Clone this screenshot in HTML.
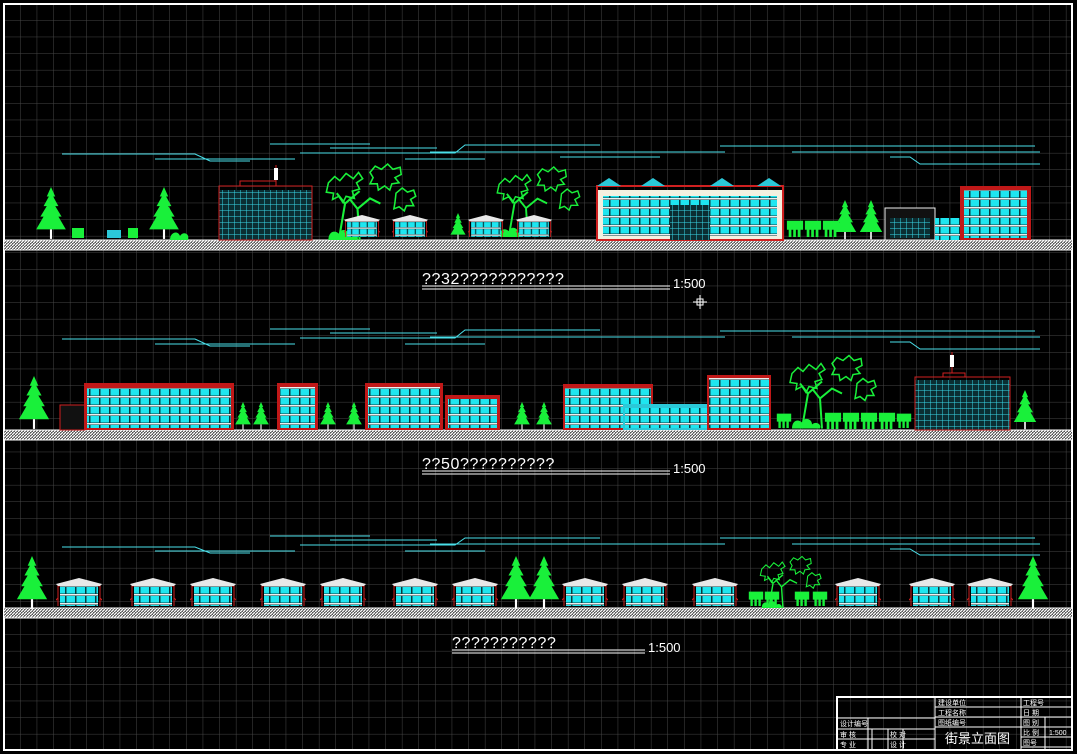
<!DOCTYPE html>
<html><head><meta charset="utf-8"><style>
html,body{margin:0;padding:0;background:#000;width:1077px;height:754px;overflow:hidden}
svg{display:block}
text{font-family:"Liberation Sans","Noto Sans CJK SC",sans-serif}
</style></head><body>
<svg width="1077" height="754" viewBox="0 0 1077 754" xmlns="http://www.w3.org/2000/svg">
<defs>
<pattern id="grid" width="16.6" height="16.6" patternUnits="userSpaceOnUse" x="4" y="4">
<path d="M16.6 0V16.6H0" fill="none" stroke="#474747" stroke-width="1"/></pattern>
<pattern id="hatch" width="3" height="3" patternUnits="userSpaceOnUse">
<rect width="3" height="3" fill="#555"/><path d="M0 3L3 0" stroke="#fff" stroke-width="1.2"/></pattern>
<pattern id="win" width="10" height="9" patternUnits="userSpaceOnUse">
<rect width="10" height="9" fill="#0a3a3e"/><rect x="0.5" y="2" width="8.5" height="6.5" fill="#1ee6f0"/><rect y="0" width="10" height="1.5" fill="#eee"/></pattern>
<pattern id="glass" width="6" height="6" patternUnits="userSpaceOnUse">
<rect width="6" height="6" fill="#0b2e32"/><path d="M0 0H6M0 0V6" stroke="#3ad8e8" stroke-width="1"/></pattern>
<symbol id="pine" viewBox="0 0 28 50">
<polygon points="14,0 18,9 16,9 21,18 18,18 24,28 21,28 28,40 0,40 7,28 4,28 10,18 7,18 12,9 10,9" fill="#19f03a"/>
<rect x="13" y="40" width="2" height="9" fill="#fff"/></symbol>
<symbol id="house" viewBox="0 0 46 32">
<path d="M2 30V10H44V30" fill="none" stroke="#d02020"/>
<polygon points="0,8 23,2 46,8 44,10 2,10" fill="#e8e8e8"/>
<rect x="4" y="10" width="38" height="20" fill="url(#win)"/>
<path d="M-6 30L2 22M44 22L52 30" stroke="#d02020"/></symbol>
<symbol id="tree" viewBox="0 0 120 75">
<path d="M20 20l6-6 5 4 6-7 7 5 5-6 4 6-6 4 3 6-7 2 2 7-8-2-3 6-4-6-6 3 1-6-7-1zM60 10l5-6 6 3 6-5 5 5 7-2 1 7-6 3 4 5-7 1-2 6-5-4-6 4-1-6-7 0 3-6zM85 30l6-5 5 4 6-2 2 6-5 3 3 6-7 0-2 5-5-4-5 2 1-6z" fill="none" stroke="#19f03a" stroke-width="1.5"/>
<path d="M30 75L36 40L28 30M36 40L50 28M50 75L48 45L60 35L70 40M48 45L40 35" fill="none" stroke="#19f03a" stroke-width="2"/>
<path d="M20 75c0-8 6-10 10-6 2-6 10-4 10 2 4-4 10 0 8 4z" fill="#19f03a"/></symbol>
<symbol id="shrub" viewBox="0 0 20 20">
<path d="M1 2h18v10h-3v8h-3v-8h-2v8H8v-8H6v8H3v-8H1z" fill="#19f03a"/></symbol>
</defs>
<rect width="1077" height="754" fill="#000"/>
<rect x="4" y="4" width="1068" height="746" fill="url(#grid)"/>
<rect x="4" y="4" width="1068" height="746" fill="none" stroke="#fff" stroke-width="2"/>

<g stroke="#4ae0ea" stroke-width="1" fill="none">
<path d="M62 154H195L210 161H250M155 159H295M270 144H370M330 148H437M300 153H455L465 145H600M405 159H485M430 152H725M720 146H1035M792 152H1040M890 157H910L920 164H1040M560 157H660"/>
<path d="M62 339H195L210 346H250M155 344H295M270 329H370M330 333H437M300 338H455L465 330H600M405 344H485M430 337H725M720 331H1035M792 337H1040M890 342H910L920 349H1040"/>
<path d="M62 547H195L210 553H250M155 551H295M270 536H370M330 540H437M300 545H455L465 538H600M405 551H485M430 544H725M720 538H1035M792 544H1040M890 549H910L920 555H1040"/>
</g>

<rect x="4" y="240" width="1068" height="10" fill="url(#hatch)"/><path d="M4 240H1072M4 250H1072" stroke="#fff"/>
<rect x="4" y="430" width="1068" height="10" fill="url(#hatch)"/><path d="M4 430H1072M4 440H1072" stroke="#fff"/>
<rect x="4" y="608" width="1068" height="10" fill="url(#hatch)"/><path d="M4 608H1072M4 618H1072" stroke="#fff"/>

<!-- STRIP 1 -->
<use href="#pine" x="36" y="187" width="30" height="53"/>
<use href="#pine" x="149" y="187" width="30" height="53"/>
<use href="#pine" x="450" y="213" width="16" height="27"/>
<use href="#pine" x="832" y="200" width="26" height="40"/>
<use href="#pine" x="858" y="200" width="26" height="40"/>
<rect x="72" y="228" width="12" height="10" fill="#19f03a"/><rect x="128" y="228" width="10" height="10" fill="#19f03a"/>
<rect x="107" y="230" width="14" height="8" fill="#2bc8d8"/>
<path d="M170 240c0-8 8-10 10-4 3-5 10-3 8 4z" fill="#19f03a"/>
<rect x="219" y="190" width="93" height="50" fill="url(#glass)"/>
<rect x="219" y="186" width="93" height="54" fill="none" stroke="#d02020"/>
<path d="M240 186V181H276V186M276 181V165" stroke="#d02020" fill="none"/><rect x="274" y="168" width="4" height="12" fill="#fff"/>
<use href="#tree" x="305" y="162" width="130" height="78"/>
<use href="#tree" x="480" y="162" width="115" height="78"/>
<use href="#house" x="344" y="212" width="36" height="28"/>
<use href="#house" x="392" y="212" width="36" height="28"/>
<use href="#house" x="468" y="212" width="36" height="28"/>
<use href="#house" x="516" y="212" width="36" height="28"/>
<rect x="597" y="190" width="186" height="50" fill="#f4f0e0"/>
<rect x="603" y="196" width="174" height="40" fill="url(#win)"/>
<rect x="597" y="186" width="186" height="54" fill="none" stroke="#d02020" stroke-width="2"/>
<rect x="670" y="205" width="40" height="35" fill="url(#glass)"/>
<g fill="#2bc8d8"><polygon points="597,186 609,178 621,186"/><polygon points="641,186 653,178 665,186"/><polygon points="710,186 722,178 734,186"/><polygon points="757,186 769,178 781,186"/></g>
<g transform="translate(786,218)"><use href="#shrub" width="18" height="20"/><use href="#shrub" x="18" width="18" height="20"/><use href="#shrub" x="36" width="18" height="20"/></g>
<rect x="885" y="208" width="50" height="32" fill="#111" stroke="#eee"/><rect x="890" y="218" width="40" height="20" fill="url(#glass)"/>
<rect x="935" y="218" width="25" height="22" fill="url(#win)"/>
<rect x="960" y="186" width="71" height="54" fill="#c01818"/><rect x="964" y="190" width="63" height="48" fill="url(#win)"/>

<text x="422" y="284" fill="#fff" font-size="16" letter-spacing="0.6">??32???????????</text>
<path d="M422 286H670M422 289H670" stroke="#fff"/>
<text x="673" y="288" fill="#fff" font-size="13">1:500</text>
<path d="M700 295V309M693 302H707" stroke="#fff"/><rect x="697" y="299" width="6" height="6" fill="none" stroke="#fff"/>

<!-- STRIP 2 -->
<use href="#pine" x="18" y="376" width="32" height="54"/>
<use href="#pine" x="234" y="402" width="18" height="28"/>
<use href="#pine" x="252" y="402" width="18" height="28"/>
<use href="#pine" x="319" y="402" width="18" height="28"/>
<use href="#pine" x="345" y="402" width="18" height="28"/>
<use href="#pine" x="513" y="402" width="18" height="28"/>
<use href="#pine" x="535" y="402" width="18" height="28"/>
<use href="#pine" x="1012" y="390" width="26" height="40"/>
<rect x="60" y="405" width="25" height="25" fill="#111" stroke="#d02020"/>
<rect x="84" y="383" width="150" height="47" fill="#c01818"/><rect x="87" y="388" width="144" height="40" fill="url(#win)"/>
<rect x="277" y="383" width="41" height="47" fill="#c01818"/><rect x="280" y="387" width="35" height="41" fill="url(#win)"/>
<rect x="365" y="383" width="78" height="47" fill="#c01818"/><rect x="368" y="387" width="72" height="41" fill="url(#win)"/>
<rect x="445" y="395" width="55" height="35" fill="#c01818"/><rect x="448" y="399" width="49" height="29" fill="url(#win)"/>
<rect x="563" y="384" width="90" height="46" fill="#c01818"/><rect x="565" y="388" width="86" height="40" fill="url(#win)"/>
<rect x="623" y="404" width="117" height="26" fill="#2bc8d8"/><rect x="625" y="408" width="113" height="20" fill="url(#win)"/>
<rect x="707" y="375" width="64" height="55" fill="#c01818"/><rect x="709" y="378" width="60" height="50" fill="url(#win)"/>
<use href="#tree" x="772" y="352" width="120" height="78"/>
<g transform="translate(824,410)"><use href="#shrub" width="18" height="20"/><use href="#shrub" x="18" width="18" height="20"/><use href="#shrub" x="36" width="18" height="20"/><use href="#shrub" x="54" width="18" height="20"/><use href="#shrub" x="72" width="16" height="20"/></g>
<use href="#shrub" x="776" y="410" width="16" height="20"/>
<rect x="915" y="380" width="95" height="50" fill="url(#glass)"/>
<rect x="915" y="377" width="95" height="53" fill="none" stroke="#d02020"/>
<path d="M943 377V373H965V377M952 373V352" stroke="#d02020" fill="none"/><rect x="950" y="355" width="4" height="12" fill="#fff"/>

<text x="422" y="469" fill="#fff" font-size="16" letter-spacing="0.6">??50??????????</text>
<path d="M422 471H670M422 474H670" stroke="#fff"/>
<text x="673" y="473" fill="#fff" font-size="13">1:500</text>

<!-- STRIP 3 -->
<use href="#pine" x="16" y="556" width="32" height="54"/>
<use href="#pine" x="500" y="556" width="32" height="54"/>
<use href="#pine" x="528" y="556" width="32" height="54"/>
<use href="#pine" x="1017" y="556" width="32" height="54"/>
<use href="#house" x="56" y="576" width="46" height="32"/>
<use href="#house" x="130" y="576" width="46" height="32"/>
<use href="#house" x="190" y="576" width="46" height="32"/>
<use href="#house" x="260" y="576" width="46" height="32"/>
<use href="#house" x="320" y="576" width="46" height="32"/>
<use href="#house" x="392" y="576" width="46" height="32"/>
<use href="#house" x="452" y="576" width="46" height="32"/>
<use href="#house" x="562" y="576" width="46" height="32"/>
<use href="#house" x="622" y="576" width="46" height="32"/>
<use href="#house" x="692" y="576" width="46" height="32"/>
<use href="#house" x="835" y="576" width="46" height="32"/>
<use href="#house" x="909" y="576" width="46" height="32"/>
<use href="#house" x="967" y="576" width="46" height="32"/>
<use href="#tree" x="745" y="555" width="90" height="53"/>
<g transform="translate(748,588)"><use href="#shrub" width="16" height="20"/><use href="#shrub" x="16" width="16" height="20"/><use href="#shrub" x="46" width="16" height="20"/><use href="#shrub" x="64" width="16" height="20"/></g>

<text x="452" y="648" fill="#fff" font-size="16" letter-spacing="0.6">???????????</text>
<path d="M452 650H645M452 653H645" stroke="#fff"/>
<text x="648" y="652" fill="#fff" font-size="13">1:500</text>

<g stroke="#fff" fill="none" stroke-width="1">
<rect x="837" y="697" width="235" height="53" stroke-width="2"/>
<path d="M837 718H935M837 729H935M837 739H935M868 718V750M872 729V750M888 729V750M903 729V750M935 697V750M935 707H1072M935 717H1072M935 727H1021M1021 697V750M1021 737H1072M1021 747H1072M1021 727H1072M1045 717V750"/>
</g>
<g fill="#fff" font-size="7">
<text x="938" y="705">建设单位</text><text x="938" y="715">工程名称</text><text x="938" y="725">图纸编号</text>
<text x="1023" y="705">工程号</text><text x="1023" y="715">日 期</text><text x="1023" y="725">图 别</text><text x="1023" y="735">比 例</text><text x="1023" y="745">图号</text>
<text x="1049" y="735">1:500</text>
<text x="840" y="726">设计编号</text><text x="840" y="737">审 核</text><text x="840" y="747">专 业</text>
<text x="890" y="737">校 对</text><text x="890" y="747">设 计</text>
</g>
<text x="945" y="743" fill="#fff" font-size="13" font-family="'Noto Sans CJK SC',sans-serif">街景立面图</text>
</svg>
</body></html>
